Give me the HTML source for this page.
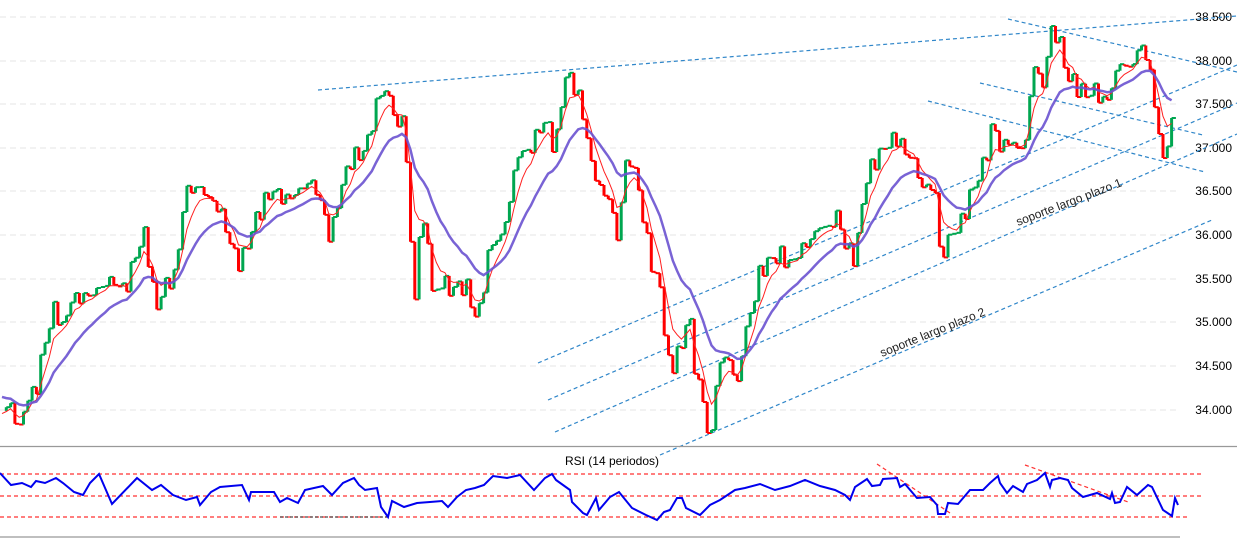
<!DOCTYPE html>
<html><head><meta charset="utf-8"><style>
html,body{margin:0;padding:0;background:#fff;}
svg{display:block;font-family:"Liberation Sans",sans-serif;}
</style></head><body>
<svg id="s" width="1237" height="538" viewBox="0 0 1237 538" xmlns="http://www.w3.org/2000/svg">
<g id="grid" stroke="#e6e6e6" stroke-width="1" stroke-dasharray="6,4"></g>
<g font-size="12" fill="#000" text-anchor="end">
<text x="1232" y="21">38.500</text><text x="1232" y="65">38.000</text><text x="1232" y="108">37.500</text>
<text x="1232" y="152">37.000</text><text x="1232" y="195">36.500</text><text x="1232" y="239">36.000</text>
<text x="1232" y="283">35.500</text><text x="1232" y="326">35.000</text><text x="1232" y="370">34.500</text>
<text x="1232" y="414">34.000</text>
</g>
<g stroke="#2f86c9" stroke-width="1.2" stroke-dasharray="4,3" fill="none">
<line x1="318" y1="90" x2="1237" y2="16"/>
<line x1="1008" y1="19" x2="1237" y2="72"/>
<line x1="980" y1="83" x2="1203" y2="135"/>
<line x1="928" y1="101" x2="1205" y2="172"/>
<line x1="538" y1="363" x2="1237" y2="65"/>
<line x1="548" y1="400" x2="1237" y2="103"/>
<line x1="555" y1="432" x2="1237" y2="134"/>
<line x1="660" y1="455" x2="1212" y2="220"/>
</g>
<g id="candles"></g>
<polyline id="ma1" fill="none" stroke="#ff2020" stroke-width="1"/>
<polyline id="ma2" fill="none" stroke="#6a52d0" stroke-width="2.5" stroke-opacity="0.9"/>
<g font-size="12" fill="#222" font-family="Liberation Sans,sans-serif">
<text transform="translate(1018,226) rotate(-21)">soporte largo plazo 1</text>
<text transform="translate(882,357) rotate(-22)">soporte largo plazo 2</text>
</g>
<line x1="0" y1="446.5" x2="1237" y2="446.5" stroke="#999" stroke-width="1.2"/>
<line x1="0" y1="537" x2="1180" y2="537" stroke="#999" stroke-width="1.2"/>
<text x="612" y="465" font-size="12" text-anchor="middle" fill="#000">RSI (14 periodos)</text>
<g stroke="#ff3030" stroke-width="1.2" stroke-dasharray="4,3">
<line x1="0" y1="474" x2="1202" y2="474"/>
<line x1="0" y1="496" x2="1202" y2="496"/>
<line x1="0" y1="517" x2="1190" y2="517"/>
<line x1="877" y1="464" x2="950" y2="513"/>
<line x1="1025" y1="465" x2="1128" y2="502"/>
</g>
<line x1="280" y1="517" x2="390" y2="517" stroke="#222" stroke-width="1" stroke-dasharray="3,2"/>
<polyline id="rsi" fill="none" stroke="#0000ee" stroke-width="2"/>
</svg>
<script>
var NS="http://www.w3.org/2000/svg";
var g=document.getElementById('grid');
[17,61,104,148,191,235,279,322,366,410].forEach(function(y){var l=document.createElementNS(NS,'line');l.setAttribute('x1',0);l.setAttribute('x2',1180);l.setAttribute('y1',y);l.setAttribute('y2',y);g.appendChild(l);});
var A=[[0,410],[10,405],[20,432],[25,400],[35,392],[45,340],[55,305],[62,330],[70,300],[90,295],[110,280],[125,290],[135,255],[145,232],[155,310],[165,285],[175,275],[185,190],[200,188],[210,200],[220,210],[232,250],[240,265],[255,220],[265,200],[272,190],[285,200],[300,190],[310,180],[320,200],[330,240],[340,190],[350,160],[365,150],[375,110],[382,86],[392,105],[400,140],[403,102],[407,175],[414,312],[420,220],[428,240],[433,305],[440,280],[450,290],[460,285],[468,290],[476,322],[483,290],[490,242],[500,240],[510,200],[516,155],[530,150],[540,125],[548,125],[555,155],[562,90],[568,72],[575,90],[582,110],[590,160],[600,190],[610,200],[617,240],[625,165],[632,160],[640,200],[650,260],[660,290],[665,335],[670,378],[676,350],[682,350],[688,300],[693,365],[700,385],[707,430],[712,432],[718,360],[730,360],[738,390],[742,345],[750,315],[760,270],[770,260],[780,255],[790,265],[800,250],[810,240],[820,225],[830,230],[835,210],[845,245],[855,260],[865,180],[875,160],[890,140],[900,140],[905,155],[912,155],[920,185],[935,190],[940,260],[950,235],[960,225],[970,195],[985,160],[993,120],[1000,150],[1008,140],[1018,150],[1026,140],[1033,60],[1042,90],[1050,32],[1058,35],[1066,75],[1075,85],[1085,95],[1095,90],[1105,105],[1110,90],[1120,62],[1130,70],[1138,48],[1145,50],[1150,75],[1156,115],[1160,140],[1163,158],[1166,160],[1170,118],[1175,118]];
function interp(x){for(var i=1;i<A.length;i++){if(A[i][0]>=x){var a=A[i-1],b=A[i];var t=(x-a[0])/((b[0]-a[0])||1);return a[1]+(b[1]-a[1])*t;}}return A[A.length-1][1];}
var step=4.3,cl=[],xs=[];
for(var x=2;x<=1172;x+=step){var y=interp(x)+6*Math.sin(x*0.9)+4*Math.sin(x*2.3);if(x>1160)y=interp(x);xs.push(x);cl.push(y);}
var c=document.getElementById('candles'),h='';
for(var i=1;i<cl.length;i++){var o=cl[i-1],e=cl[i];var col=e<o?'#00a650':'#ff0000';
h+='<line x1="'+xs[i].toFixed(1)+'" x2="'+xs[i].toFixed(1)+'" y1="'+o.toFixed(1)+'" y2="'+e.toFixed(1)+'" stroke="'+col+'" stroke-width="3"/>';
h+='<line x1="'+xs[i].toFixed(1)+'" x2="'+(xs[i]+step).toFixed(1)+'" y1="'+e.toFixed(1)+'" y2="'+e.toFixed(1)+'" stroke="'+col+'" stroke-width="2"/>';}
c.innerHTML=h;
function ema(k,start){var r=[],v=start;for(var i=0;i<cl.length;i++){v=v+(cl[i]-v)*k;r.push(xs[i].toFixed(1)+','+v.toFixed(1));}return r.join(' ');}
document.getElementById('ma1').setAttribute('points',ema(0.33,415));
document.getElementById('ma2').setAttribute('points',ema(0.12,395));
var R=[[0,473],[11,485],[22,483],[31,487],[36,481],[45,483],[56,478],[63,483],[74,492],[83,495],[90,483],[99,474],[112,504],[137,478],[152,490],[161,485],[173,495],[186,500],[197,497],[200,505],[211,492],[220,487],[242,485],[249,500],[251,492],[274,492],[280,502],[287,498],[298,503],[305,490],[323,486],[332,495],[343,483],[354,478],[359,485],[365,490],[377,488],[381,507],[388,517],[392,501],[404,507],[417,503],[430,502],[442,501],[448,507],[457,497],[466,490],[475,488],[484,485],[493,476],[507,478],[520,475],[534,490],[545,478],[552,474],[556,480],[570,490],[572,502],[583,513],[587,515],[596,498],[599,510],[610,497],[619,492],[632,508],[646,515],[657,520],[664,512],[670,510],[677,498],[682,498],[686,508],[700,515],[710,505],[720,500],[735,490],[745,488],[760,484],[775,490],[790,486],[805,480],[820,486],[835,490],[845,495],[850,500],[855,487],[867,479],[872,486],[880,485],[883,479],[897,478],[900,487],[905,484],[917,498],[930,497],[937,505],[938,514],[945,514],[948,503],[958,504],[970,490],[983,490],[990,483],[998,476],[1000,483],[1007,493],[1013,486],[1023,492],[1027,484],[1037,480],[1045,473],[1050,487],[1052,480],[1060,478],[1068,480],[1072,488],[1083,497],[1097,493],[1110,499],[1112,493],[1115,503],[1120,502],[1127,487],[1137,495],[1148,485],[1152,487],[1163,510],[1172,516],[1175,498],[1178,505]];
document.getElementById('rsi').setAttribute('points',R.map(function(p){return p.join(',');}).join(' '));
</script>
</body></html>
